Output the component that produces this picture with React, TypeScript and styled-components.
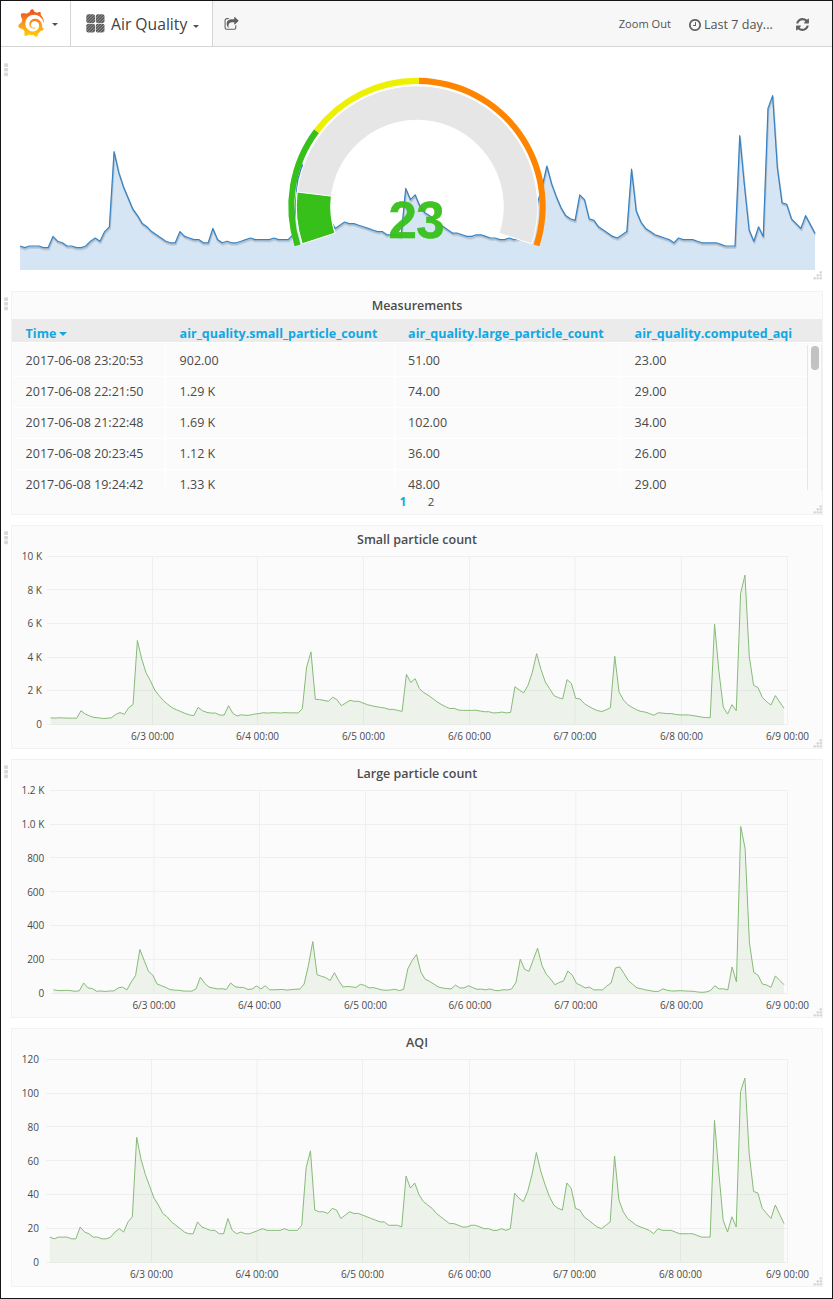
import React from 'react';
import styled, { createGlobalStyle } from 'styled-components';
import { SiGrafana } from 'react-icons/si';

const GlobalStyle = createGlobalStyle`
  * { box-sizing: border-box; }
  body {
    margin: 0;
    background: #fff;
    color: #525252;
    font-family: 'Open Sans', 'Noto Sans', sans-serif;
  }
`;

const Page = styled.div`
  width: 833px;
  height: 1299px;
  border: 1px solid #161418;
  background: #fff;
  display: flex;
  flex-direction: column;
`;

const Navbar = styled.header`
  display: flex;
  height: 46px;
  flex: none;
  background: #f7f7f7;
  border-bottom: 1px solid #d5d5d5;
`;

const NavSection = styled.div<{ $width: number; $pad: number }>`
  display: flex;
  align-items: center;
  width: ${(p) => p.$width}px;
  padding-left: ${(p) => p.$pad}px;
  background: #fff;
  border-right: 1px solid #d5d5d5;
`;

const GrafanaMark = styled(SiGrafana)`
  width: 28px;
  height: 28px;
  margin-top: -1px;
  path { fill: url(#flame); }
`;

const Caret = styled.span<{ $left: number; $top?: number; $size?: number }>`
  width: 0;
  height: 0;
  margin: ${(p) => p.$top ?? 0}px 0 0 ${(p) => p.$left}px;
  border: ${(p) => p.$size ?? 3}px solid transparent;
  border-top-color: currentColor;
  border-bottom: 0;
`;

const DashTitle = styled.h1`
  margin: 1px 0 0 6px;
  font-size: 15.7px;
  font-weight: 400;
  line-height: 22px;
  white-space: nowrap;
  color: #424242;
`;

const NavIcon = styled.svg<{ $w: number; $h: number }>`
  width: ${(p) => p.$w}px;
  height: ${(p) => p.$h}px;
  fill: #606060;
  flex: none;
`;

const NavTools = styled.div`
  display: flex;
  flex: 1;
  align-items: center;
  padding-left: 10.5px;
`;

const Share = styled.span`
  display: flex;
  padding-top: 2px;
`;

const ZoomOut = styled.span`
  margin-left: auto;
  margin-right: 17px;
  font-size: 11.1px;
  line-height: 20px;
  white-space: nowrap;
`;

const TimeRange = styled.span`
  display: flex;
  align-items: center;
  gap: 2px;
  width: 108px;
  padding-top: 2px;
  font-size: 12.6px;
  line-height: 20px;
  white-space: nowrap;
`;

const Refresh = styled.span`
  display: flex;
  width: 36px;
  padding-top: 2px;
`;

const Rows = styled.main`
  display: flex;
  flex-direction: column;
  gap: 10px;
  padding: 10px 9px 0 10px;
`;

const Panel = styled.section<{ $height: number; $bare?: boolean }>`
  position: relative;
  height: ${(p) => p.$height}px;
  display: flex;
  flex-direction: column;
  background: ${(p) => (p.$bare ? 'transparent' : '#fbfbfb')};
  border: 1px solid ${(p) => (p.$bare ? 'transparent' : '#f2f2f5')};
`;

const PanelTitle = styled.h2`
  margin: 0;
  height: 27px;
  flex: none;
  font-size: 12.5px;
  font-weight: 600;
  line-height: 27px;
  text-align: center;
  color: #4c4c4c;
`;

const DragDots = styled.svg`
  position: absolute;
  left: -8px;
  top: 5px;
  width: 5px;
  height: 14px;
  fill: #d9d9d9;
`;

const ResizeDots = styled.svg`
  position: absolute;
  right: -1px;
  bottom: -1px;
  width: 10px;
  height: 10px;
  fill: #d3d3d3;
`;

const ChartSvg = styled.svg`
  display: block;
  flex: none;
  overflow: visible;
`;

const AxisLabel = styled.text`
  font-size: 10px;
  fill: #4a4a4a;
`;

const GaugeValue = styled.text`
  font-family: 'Liberation Sans', Arial, sans-serif;
  font-weight: 700;
  font-size: 51px;
  letter-spacing: -0.6px;
  text-anchor: middle;
  fill: #37c01a;
  fill-opacity: 0.95;
  stroke: #37c01a;
  stroke-width: 0.5px;
`;

const columns = '154px 228.5px 226.5px 1fr';

const TableHead = styled.div`
  display: grid;
  grid-template-columns: ${columns};
  height: 24px;
  flex: none;
  background: #ebebeb;
  border-bottom: 1px solid #fff;
`;

const HeadCell = styled.div`
  display: flex;
  align-items: center;
  padding: 6px 0 0 13.6px;
  font-size: 12.53px;
  line-height: 17px;
  font-weight: 700;
  white-space: nowrap;
  color: #12a7e2;
`;

const TableScroll = styled.div`
  display: flex;
  height: 147px;
  flex: none;
  padding-top: 2px;
  overflow: hidden;
`;

const TableBody = styled.div`
  width: 795px;
  flex: none;
`;

const TableRow = styled.div`
  display: grid;
  grid-template-columns: ${columns};
  height: 31px;
`;

const Cell = styled.div`
  padding-left: 13.6px;
  font-size: 12.5px;
  line-height: 31px;
  white-space: nowrap;
  border-bottom: 1px solid #fff;
  border-right: 1px solid #fff;
  color: #4a4a4a;
  &:last-child { border-right: 0; }
`;

const ScrollTrack = styled.div`
  flex: 1;
  padding: 1px 0 0 3px;
  border-left: 1px solid #e6e6e6;
  border-right: 1px solid #ededed;
`;

const ScrollThumb = styled.div`
  width: 8px;
  height: 24px;
  border-radius: 4px;
  background: #c2c2c2;
`;

const Pager = styled.div`
  display: flex;
  justify-content: center;
  gap: 21.5px;
  padding-top: 1px;
  font-size: 11.5px;
  line-height: 22px;
`;

const PageLink = styled.span<{ $active?: boolean }>`
  font-weight: ${(p) => (p.$active ? 700 : 400)};
  color: ${(p) => (p.$active ? '#12a7e2' : '#4a4a4a')};
`;

const aqi = [
  15, 14, 15, 15, 15, 14, 14, 21, 18, 17, 15, 15, 14, 14, 15, 18, 20, 18, 24, 27, 74, 61, 52, 45, 38, 34, 29, 27, 24, 22,
  20, 18, 17, 17, 24, 21, 20, 19, 19, 17, 17, 26, 19, 17, 18, 17, 17, 18, 19, 20, 19, 19, 19, 19, 20, 19, 19, 19, 22, 56,
  66, 31, 30, 30, 29, 32, 31, 26, 28, 30, 29, 29, 28, 27, 26, 25, 24, 24, 22, 22, 22, 21, 51, 44, 47, 40, 36, 34, 32, 29,
  27, 25, 23, 23, 22, 21, 21, 22, 22, 21, 20, 20, 19, 19, 20, 19, 20, 41, 38, 36, 42, 52, 65, 54, 46, 39, 34, 32, 31, 47,
  44, 32, 31, 27, 25, 23, 21, 20, 22, 24, 63, 37, 30, 26, 24, 22, 21, 20, 19, 17, 20, 19, 19, 19, 18, 17, 17, 17, 17, 16,
  15, 15, 15, 84, 53, 25, 18, 27, 21, 101, 109, 64, 42, 41, 32, 29, 26, 34, 28.5, 23,
];

const small = [
  0.4, 0.38, 0.4, 0.39, 0.38, 0.38, 0.37, 0.82, 0.62, 0.51, 0.42, 0.4, 0.36, 0.37, 0.4, 0.6, 0.71, 0.61, 1, 1.19, 5,
  3.9, 3.08, 2.6, 2.05, 1.72, 1.42, 1.2, 1, 0.88, 0.77, 0.66, 0.57, 0.53, 1.02, 0.82, 0.72, 0.68, 0.68, 0.56, 0.56,
  1.12, 0.66, 0.51, 0.58, 0.54, 0.56, 0.62, 0.65, 0.7, 0.68, 0.7, 0.7, 0.68, 0.71, 0.69, 0.7, 0.68, 0.94, 3.42, 4.32,
  1.5, 1.48, 1.44, 1.38, 1.62, 1.48, 1.12, 1.28, 1.44, 1.38, 1.38, 1.28, 1.18, 1.12, 1.06, 1.02, 0.98, 0.9, 0.9, 0.84,
  0.78, 2.99, 2.5, 2.73, 2.13, 1.9, 1.74, 1.56, 1.36, 1.2, 1.06, 0.95, 0.96, 0.86, 0.84, 0.84, 0.84, 0.85, 0.8, 0.76,
  0.76, 0.69, 0.7, 0.74, 0.69, 0.72, 2.25, 2.05, 1.88, 2.33, 3.1, 4.22, 3.27, 2.53, 2.13, 1.72, 1.6, 1.52, 2.67, 2.45,
  1.56, 1.52, 1.24, 1.08, 0.94, 0.83, 0.77, 0.87, 1, 4.06, 1.93, 1.46, 1.18, 1.02, 0.88, 0.78, 0.74, 0.65, 0.55, 0.7,
  0.68, 0.65, 0.65, 0.6, 0.57, 0.57, 0.57, 0.53, 0.49, 0.44, 0.41, 0.41, 5.97, 3.17, 1.04, 0.62, 1.18, 0.82, 7.8, 8.89,
  4.06, 2.33, 2.2, 1.62, 1.36, 1.16, 1.72, 1.34, 0.96,
];

const large = [
  22, 18, 17, 19, 17, 13, 16, 62, 33, 29, 13, 15, 12, 15, 15, 33, 38, 21, 68, 106, 260, 196, 131, 108, 56, 46, 36, 23,
  20, 19, 15, 14, 14, 27, 96, 60, 38, 32, 27, 28, 24, 62, 40, 36, 36, 24, 27, 45, 27, 46, 22, 22, 23, 24, 20, 23, 25,
  26, 56, 167, 307, 111, 102, 94, 76, 123, 76, 38, 42, 39, 36, 54, 48, 33, 35, 28, 21, 19, 21, 25, 17, 24, 147, 196,
  230, 127, 84, 72, 56, 39, 33, 29, 27, 50, 33, 33, 46, 35, 25, 26, 22, 27, 19, 16, 22, 21, 27, 66, 203, 143, 131, 200,
  268, 167, 114, 86, 52, 65, 74, 133, 110, 60, 48, 33, 38, 21, 22, 21, 44, 62, 151, 157, 118, 76, 54, 33, 28, 21, 17,
  12, 13, 27, 19, 15, 15, 17, 15, 14, 13, 9, 7, 9, 17, 46, 27, 28, 21, 157, 68, 987, 858, 301, 125, 108, 56, 50, 36,
  104, 78, 52,
];

const measurements = [
  ['2017-06-08 23:20:53', '902.00', '51.00', '23.00'],
  ['2017-06-08 22:21:50', '1.29 K', '74.00', '29.00'],
  ['2017-06-08 21:22:48', '1.69 K', '102.00', '34.00'],
  ['2017-06-08 20:23:45', '1.12 K', '36.00', '26.00'],
  ['2017-06-08 19:24:42', '1.33 K', '48.00', '29.00'],
];

const days = ['6/3', '6/4', '6/5', '6/6', '6/7', '6/8', '6/9'];

const linePoints = (data: number[], x0: number, x1: number, base: number, unit: number) =>
  data
    .map((v, i) => `${(x0 + ((x1 - x0) * i) / (data.length - 1)).toFixed(2)},${(base - v * unit).toFixed(2)}`)
    .join(' ');

const DragHandle = () => (
  <DragDots viewBox="0 0 5 14">
    {[0, 4.6, 9.2].map((y) => (
      <rect key={y} x="0.1" y={y + 0.3} width="4" height="3.7" rx="1" />
    ))}
  </DragDots>
);

const ResizeHandle = () => (
  <ResizeDots viewBox="0 0 10 10">
    {[[6.5, 0.2], [3.5, 3.2], [6.5, 3.2], [0.5, 6.2], [3.5, 6.2], [6.5, 6.2]].map(([x, y]) => (
      <rect key={`${x}-${y}`} x={x} y={y} width="2.4" height="2.4" rx="0.8" />
    ))}
  </ResizeDots>
);

interface ChartProps {
  data: number[];
  max: number;
  labels: string[];
  height: number;
  gridLeft: number;
  lineLeft: number;
  labelRight: number;
  ticks: number[];
}

const TOP = 3.5;
const RIGHT = 775.5;

const Chart = ({ data, max, labels, height, gridLeft, lineLeft, labelRight, ticks }: ChartProps) => {
  const base = height - 23.5;
  const points = linePoints(data, lineLeft, 772, base, (base - TOP) / max);
  const step = (base - TOP) / (labels.length - 1);
  return (
    <ChartSvg width="810" height={height}>
      {labels.map((label, i) => {
        const y = Math.round(base - i * step - 0.7) + 0.5;
        return (
          <g key={label}>
            <line x1={gridLeft} x2={RIGHT} y1={y} y2={y} stroke="#efefef" />
            <AxisLabel x={labelRight} y={Math.round(base - i * step + 3.5)} textAnchor="end">{label}</AxisLabel>
          </g>
        );
      })}
      {ticks.map((x, i) => (
        <g key={days[i]}>
          <line x1={x} x2={x} y1={TOP} y2={base} stroke="#efefef" />
          <AxisLabel x={x} y={height - 8} textAnchor="middle">{`${days[i]} 00:00`}</AxisLabel>
        </g>
      ))}
      <polygon points={`${lineLeft},${base} ${points} 772,${base}`} fill="#7eb26d" fillOpacity="0.11" />
      <polyline points={points} fill="none" stroke="#86bb77" strokeWidth="1" strokeLinejoin="round" />
    </ChartSvg>
  );
};

const CX = 405;
const CY = 148.5;

const polar = (r: number, deg: number) => {
  const a = (deg * Math.PI) / 180;
  return `${(CX - r * Math.cos(a)).toFixed(2)} ${(CY - r * Math.sin(a)).toFixed(2)}`;
};

/* Angles are measured clockwise from the left horizontal. */
const band = (outer: number, inner: number, from: number, to: number) => {
  const big = to - from > 180 ? 1 : 0;
  return `M${polar(outer, from)}A${outer} ${outer} 0 ${big} 1 ${polar(outer, to)}L${polar(inner, to)}A${inner} ${inner} 0 ${big} 0 ${polar(inner, from)}Z`;
};

const Gauge = () => {
  const points = linePoints(aqi, 8, 803, 212, 1.6);
  return (
    <ChartSvg width="810" height="222">
      <polygon points={`8,212 ${points} 803,212`} fill="#d6e5f4" />
      <polyline points={points} transform="translate(0.6 2)" fill="none" stroke="#000" strokeOpacity="0.1" strokeWidth="2" strokeLinejoin="round" />
      <polyline points={points} transform="translate(0.3 1)" fill="none" stroke="#000" strokeOpacity="0.1" strokeWidth="1.5" strokeLinejoin="round" />
      <polyline points={points} fill="none" stroke="#3583c6" strokeWidth="1.2" strokeLinejoin="round" />
      <path d={band(120.7, 86.3, -18, 198)} fill="#e6e6e6" stroke="#fff" strokeWidth="1" />
      <path d={band(120.7, 86.3, -18, 6.9)} fill="#37c01a" stroke="#fff" strokeWidth="1" />
      <path d={band(128.7, 122.6, -18, 36.9)} fill="#37c01a" />
      <path d={band(128.7, 122.6, 36.9, 90.9)} fill="#edf000" />
      <path d={band(128.7, 122.6, 90.9, 198)} fill="#ff8400" />
      <GaugeValue x={CX - 0.8} y="180">23</GaugeValue>
    </ChartSvg>
  );
};

const SHARE =
  'M1472 989v259q0 119-84.5 203.5t-203.5 84.5h-832q-119 0-203.5-84.5t-84.5-203.5v-832q0-119 84.5-203.5t203.5-84.5h255q13 0 22.5 9.5t9.5 22.5q0 27-26 32-77 26-133 60-10 4-16 4h-112q-66 0-113 47t-47 113v832q0 66 47 113t113 47h832q66 0 113-47t47-113v-214q0-19 18-29 28-13 54-37 16-16 35-8 21 9 21 29zm237-496l-384 384q-18 19-45 19-12 0-25-5-39-17-39-59v-192h-160q-323 0-438 131-119 137-74 473 3 23-20 34-8 2-12 2-16 0-26-13-10-14-21-31t-39.5-68.5-49.5-99.5-38.5-114-17.5-122q0-49 3.5-91t14-90 28-88 47-81.5 68.5-74 94.5-61.5 124.5-48.5 159.5-30.5 196.5-11h160v-192q0-42 39-59 13-5 25-5 26 0 45 19l384 384q19 19 19 45t-19 45z';
const CLOCK =
  'M1024 544v448q0 14-9 23t-23 9h-320q-14 0-23-9t-9-23v-64q0-14 9-23t23-9h224v-352q0-14 9-23t23-9h64q14 0 23 9t9 23zm416 352q0-148-73-273t-198-198-273-73-273 73-198 198-73 273 73 273 198 198 273 73 273-73 198-198 73-273zm224 0q0 209-103 385.5t-279.5 279.5-385.5 103-385.5-103-279.5-279.5-103-385.5 103-385.5 279.5-279.5 385.5-103 385.5 103 279.5 279.5 103 385.5z';
const REFRESH =
  'M1511 1056q0 5-1 7-64 268-268 434.5t-478 166.5q-146 0-282.5-55t-243.5-157l-129 129q-19 19-45 19t-45-19-19-45v-448q0-26 19-45t45-19h448q26 0 45 19t19 45-19 45l-137 137q71 66 161 102t187 36q134 0 250-65t186-179q11-17 53-117 8-23 30-23h192q13 0 22.5 9.5t9.5 22.5zm25-800v448q0 26-19 45t-45 19h-448q-26 0-45-19t-19-45 19-45l138-138q-148-137-349-137-134 0-250 65t-186 179q-11 17-53 117-8 23-30 23h-199q-13 0-22.5-9.5t-9.5-22.5v-7q65-268 270-434.5t480-166.5q146 0 284 55.5t245 156.5l130-129q19-19 45-19t45 19 19 45z';

const TopNav = () => (
  <Navbar>
    <NavSection $width={70} $pad={16}>
      <svg width="0" height="0">
        <defs>
          <linearGradient id="flame" x1="0" y1="1" x2="0" y2="0">
            <stop offset="0" stopColor="#fdd109" />
            <stop offset="0.45" stopColor="#f99b1c" />
            <stop offset="1" stopColor="#f0461f" />
          </linearGradient>
          <pattern id="hatch" width="2.1" height="2.1" patternUnits="userSpaceOnUse" patternTransform="rotate(45)">
            <rect width="2.1" height="2.1" fill="#a0a0a0" />
            <rect width="1.3" height="2.1" fill="#505050" />
          </pattern>
        </defs>
      </svg>
      <GrafanaMark />
      <Caret $left={7} $top={1} />
    </NavSection>
    <NavSection $width={142} $pad={15}>
      <NavIcon $w={19} $h={19} viewBox="0 0 19 19">
        {[[0.3, 0.3], [9.8, 0.3], [0.3, 9.8], [9.8, 9.8]].map(([x, y]) => (
          <rect key={`${x}-${y}`} x={x} y={y} width="8.7" height="8.7" rx="1.8" fill="url(#hatch)" />
        ))}
      </NavIcon>
      <DashTitle>Air Quality</DashTitle>
      <Caret $left={6} $top={6} />
    </NavSection>
    <NavTools>
      <Share>
        <NavIcon $w={15} $h={15} viewBox="0 0 1792 1792"><path d={SHARE} /></NavIcon>
      </Share>
      <ZoomOut>Zoom Out</ZoomOut>
      <TimeRange>
        <NavIcon $w={14} $h={14} viewBox="0 0 1792 1792"><path d={CLOCK} /></NavIcon>
        Last 7 day...
      </TimeRange>
      <Refresh>
        <NavIcon $w={13} $h={15} viewBox="0 0 1536 1792"><path d={REFRESH} /></NavIcon>
      </Refresh>
    </NavTools>
  </Navbar>
);

export default function App() {
  return (
    <Page>
      <GlobalStyle />
      <TopNav />
      <Rows>
        <Panel $height={224} $bare>
          <DragHandle />
          <Gauge />
          <ResizeHandle />
        </Panel>

        <Panel $height={224}>
          <DragHandle />
          <PanelTitle>Measurements</PanelTitle>
          <TableHead>
            <HeadCell>Time<Caret $left={3} $top={1} $size={4} /></HeadCell>
            <HeadCell>air_quality.small_particle_count</HeadCell>
            <HeadCell>air_quality.large_particle_count</HeadCell>
            <HeadCell>air_quality.computed_aqi</HeadCell>
          </TableHead>
          <TableScroll>
            <TableBody>
              {measurements.map((row) => (
                <TableRow key={row[0]}>
                  {row.map((cell, i) => <Cell key={i}>{cell}</Cell>)}
                </TableRow>
              ))}
            </TableBody>
            <ScrollTrack><ScrollThumb /></ScrollTrack>
          </TableScroll>
          <Pager>
            <PageLink $active>1</PageLink>
            <PageLink>2</PageLink>
          </Pager>
          <ResizeHandle />
        </Panel>

        <Panel $height={224}>
          <DragHandle />
          <PanelTitle>Small particle count</PanelTitle>
          <Chart
            data={small} max={10} height={195} gridLeft={35} lineLeft={38.6} labelRight={30}
            labels={['0', '2 K', '4 K', '6 K', '8 K', '10 K']}
            ticks={[140.5, 245.5, 351.5, 457.5, 563, 669.5, 775.5]}
          />
          <ResizeHandle />
        </Panel>

        <Panel $height={259}>
          <DragHandle />
          <PanelTitle>Large particle count</PanelTitle>
          <Chart
            data={large} max={1200} height={230} gridLeft={38} lineLeft={41.4} labelRight={32.3}
            labels={['0', '200', '400', '600', '800', '1.0 K', '1.2 K']}
            ticks={[142, 247.5, 353.5, 458, 563.8, 669.5, 775.5]}
          />
          <ResizeHandle />
        </Panel>

        <Panel $height={259}>
          <PanelTitle>AQI</PanelTitle>
          <Chart
            data={aqi} max={120} height={230} gridLeft={34} lineLeft={37.8} labelRight={27}
            labels={['0', '20', '40', '60', '80', '100', '120']}
            ticks={[139.5, 245, 350.5, 457.5, 562.5, 668.5, 775.5]}
          />
          <ResizeHandle />
        </Panel>
      </Rows>
    </Page>
  );
}
